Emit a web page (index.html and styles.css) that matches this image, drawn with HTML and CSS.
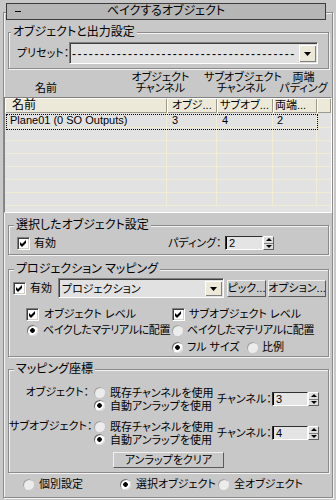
FILE: index.html
```html
<!DOCTYPE html>
<html lang="ja">
<head>
<meta charset="utf-8">
<title>ベイクするオブジェクト</title>
<link rel="stylesheet" href="styles.css">
</head>
<body>
<div class="panel">
  <div class="titlebar"><span class="minus"></span><span class="title">ベイクするオブジェクト</span><span></span></div>
  <div class="frame">
    <fieldset class="group g1">
      <legend>オブジェクトと出力設定</legend>
      <div class="gbody b1">
        <span class="plabel">プリセット：</span>
        <div class="combo preset"><span class="ctext dashes">----------------------------------------</span><span class="drop"><svg width="7" height="4" viewBox="0 0 7 4"><path d="M0 0h7L3.5 4z"/></svg></span></div>
      </div>
    </fieldset>

    <div class="colheads">
      <div class="ch ch1">名前</div>
      <div class="ch ch2">オブジェクト<br>チャンネル</div>
      <div class="ch ch3">サブオブジェクト<br>チャンネル</div>
      <div class="ch ch4">両端<br>パディング</div>
    </div>

    <div class="list">
      <div class="lhead">
        <span class="hc c1 hp1">名前</span><span class="hc c2 hp2">オブジ...</span><span class="hc c3 hp3">サブオブ...</span><span class="hc c4 hp4">両端...</span><span class="hc c5"></span>
      </div>
      <div class="lrow first"><span class="cell c1">Plane01 (0 SO Outputs)</span><span class="cell c2">3</span><span class="cell c3">4</span><span class="cell c4">2</span><span class="cell c5"></span></div>
      <div class="lrow"><span class="cell c1"></span><span class="cell c2"></span><span class="cell c3"></span><span class="cell c4"></span><span class="cell c5"></span></div>
      <div class="lrow"><span class="cell c1"></span><span class="cell c2"></span><span class="cell c3"></span><span class="cell c4"></span><span class="cell c5"></span></div>
      <div class="lrow"><span class="cell c1"></span><span class="cell c2"></span><span class="cell c3"></span><span class="cell c4"></span><span class="cell c5"></span></div>
      <div class="lrow"><span class="cell c1"></span><span class="cell c2"></span><span class="cell c3"></span><span class="cell c4"></span><span class="cell c5"></span></div>
      <div class="lrow"><span class="cell c1"></span><span class="cell c2"></span><span class="cell c3"></span><span class="cell c4"></span><span class="cell c5"></span></div>
      <div class="lrow"><span class="cell c1"></span><span class="cell c2"></span><span class="cell c3"></span><span class="cell c4"></span><span class="cell c5"></span></div>
    </div>

    <fieldset class="group g2">
      <legend>選択したオブジェクト設定</legend>
      <div class="gbody b2">
        <div class="opt w151"><span class="chk"><svg width="11" height="11" viewBox="0 0 11 11"><path d="M2 4L4 6L8 2V5L4 9L2 7Z"/></svg></span>有効</div>
        <span class="padlabel">パディング：</span>
        <span class="spin"><span class="field f38">2</span><span class="arrows"><i class="up"></i><i class="dn"></i></span></span>
      </div>
    </fieldset>

    <fieldset class="group g3">
      <legend>プロジェクション マッピング</legend>
      <div class="gbody b3">
        <div class="prow">
          <div class="opt w45"><span class="chk"><svg width="11" height="11" viewBox="0 0 11 11"><path d="M2 4L4 6L8 2V5L4 9L2 7Z"/></svg></span>有効</div>
          <div class="combo proj"><span class="ctext">プロジェクション</span><span class="drop"><svg width="7" height="4" viewBox="0 0 7 4"><path d="M0 0h7L3.5 4z"/></svg></span></div>
          <span class="btn pick">ピック...</span>
          <span class="btn optbtn">オプション...</span>
        </div>
        <div class="prow r2">
          <div class="opt lcol gap5"><span class="chk"><svg width="11" height="11" viewBox="0 0 11 11"><path d="M2 4L4 6L8 2V5L4 9L2 7Z"/></svg></span>オブジェクト レベル</div>
          <div class="opt"><span class="chk"><svg width="11" height="11" viewBox="0 0 11 11"><path d="M2 4L4 6L8 2V5L4 9L2 7Z"/></svg></span>サブオブジェクト レベル</div>
        </div>
        <div class="prow r3">
          <div class="opt lcol rpad"><span class="radio on"></span><span class="tight">ベイクしたマテリアルに配置</span></div>
          <div class="opt"><span class="radio"></span><span class="tight">ベイクしたマテリアルに配置</span></div>
        </div>
        <div class="prow r4">
          <div class="opt lcol"></div>
          <div class="opt w75"><span class="radio on"></span>フル サイズ</div>
          <div class="opt"><span class="radio"></span>比例</div>
        </div>
      </div>
    </fieldset>

    <fieldset class="group g4">
      <legend>マッピング座標</legend>
      <div class="gbody b4">
        <div class="sect">
          <span class="slabel">オブジェクト：</span>
          <div class="rcol">
            <div class="ropt"><span class="radio"></span>既存チャンネルを使用</div>
            <div class="ropt"><span class="radio on"></span>自動アンラップを使用</div>
          </div>
          <div class="chan"><span class="clabel">チャンネル：</span><span class="spin"><span class="field f36">3</span><span class="arrows"><i class="up"></i><i class="dn"></i></span></span></div>
        </div>
        <div class="sect s2">
          <span class="slabel">サブオブジェクト：</span>
          <div class="rcol">
            <div class="ropt"><span class="radio"></span>既存チャンネルを使用</div>
            <div class="ropt"><span class="radio on"></span>自動アンラップを使用</div>
          </div>
          <div class="chan"><span class="clabel">チャンネル：</span><span class="spin"><span class="field f36">4</span><span class="arrows"><i class="up"></i><i class="dn"></i></span></span></div>
        </div>
        <span class="btn clear">アンラップをクリア</span>
      </div>
    </fieldset>

    <div class="bottom">
      <div class="opt w97"><span class="radio"></span>個別設定</div>
      <div class="opt w98"><span class="radio on"></span>選択オブジェクト</div>
      <div class="opt"><span class="radio"></span>全オブジェクト</div>
    </div>
  </div>
</div>
</body>
</html>
```

FILE: styles.css
```css
* { box-sizing: border-box; }
html, body { margin: 0; padding: 0; }
body {
  width: 336px;
  height: 500px;
  overflow: hidden;
  background: #c8c8c8;
  color: #000;
  font-family: "Liberation Sans", "Noto Sans CJK JP", sans-serif;
  font-size: 11px;
  line-height: 14px;
  font-feature-settings: "palt";
}

.panel { padding-top: 3px; }

/* title bar */
.titlebar {
  position: relative;
  z-index: 1;
  margin-left: 6px;
  width: 320px;
  height: 17px;
  background: #b6b6b6;
  border: 1px solid #3c3c3c;
  display: grid;
  grid-template-columns: 1fr auto 1fr;
  align-items: center;
}
.minus { width: 6px; height: 1px; background: #000; margin-left: 8px; }
.title { line-height: 15px; font-size: 12px; }

/* rollout frame */
.frame {
  margin: -8px 0 0 3px;
  width: 330px;
  height: 486px;
  border: 1px solid #8a8a8a;
  box-shadow: inset 1px 1px 0 #f4f4f4, 1px 1px 0 #f4f4f4;
}

/* group boxes */
.group {
  margin: 0 3px 0 4px;
  padding: 0;
  min-width: 0;
  border: 1px solid #8a8a8a;
  box-shadow: inset 1px 1px 0 #f4f4f4, 1px 1px 0 #f4f4f4;
}
.group legend {
  padding: 0 2px;
  margin-left: 5px;
  line-height: 14px;
  font-size: 12px;
  background: #c8c8c8;
}
.g1 { margin-top: 12px; }
.g1 legend { margin-left: 2px; }
.g2 { margin-top: 5px; }
.g3 { margin-top: 7px; }
.g4 { margin-top: 5px; }

.gbody { display: flex; }
.b1 { padding: 3px 0 4px 8px; align-items: center; }
.b2 { padding: 3px 0 3px 8px; align-items: center; box-sizing: content-box; height: 16px; }
.b3 { flex-direction: column; padding: 2px 0 2px 4px; }
.b4 { flex-direction: column; padding: 10px 0 4px 0; }

.plabel { width: 52px; white-space: nowrap; }
.padlabel { width: 57px; white-space: nowrap; }

/* combo box */
.combo {
  display: flex;
  align-items: center;
  background: #e1e1e1;
  border: 1px solid;
  border-color: #808080 #ffffff #ffffff #808080;
  box-shadow: inset 1px 1px 0 #404040;
  padding: 1px 1px 0 0;
}
.preset { width: 249px; height: 22px; }
.proj { width: 166px; height: 20px; margin-right: 3px; }
.ctext { flex: 1; padding-left: 3px; white-space: nowrap; overflow: hidden; }
.dashes { letter-spacing: 1.6px; padding-left: 2px; font-size: 12px; }
.drop {
  width: 17px;
  align-self: stretch;
  margin: 1px 0 1px 0;
  background: #ece9d8;
  box-shadow: inset 1px 1px 0 #ffffff, inset -1px -1px 0 #808080;
  display: flex;
  align-items: center;
  justify-content: center;
}
.drop svg { display: block; fill: #000; }

/* column headers above list */
.colheads {
  display: flex;
  align-items: flex-end;
  height: 23px;
  margin-top: 2px;
  line-height: 11px;
}
.ch { text-align: center; white-space: nowrap; }
.ch1 { margin-left: 26px; width: 32px; }
.ch2 { margin-left: 68px; width: 61px; }
.ch3 { margin-left: 13px; width: 75px; }
.ch4 { width: 49px; }

/* list */
.list {
  width: 328px;
  height: 116px;
  margin-top: 3px;
  border: 1px solid;
  border-color: #808080 #ffffff #ffffff #808080;
  background: #e2e2e2;
  overflow: hidden;
}
.lhead { display: flex; height: 15px; }
.hc {
  background: #ece9d8;
  box-shadow: inset 1px 1px 0 #ffffff, inset -1px -1px 0 #9d9a8c;
  line-height: 14px;
  white-space: nowrap;
  overflow: hidden;
}
.c1 { width: 162px; }
.c2 { width: 50px; }
.c3 { width: 56px; }
.c4 { width: 44px; }
.c5 { width: 14px; }
.hp1 { padding-left: 7px; font-size: 12px; }
.hp2 { padding-left: 5px; }
.hp3 { padding-left: 3px; }
.hp4 { padding-left: 2px; }

.lrow { display: flex; height: 13px; }
.lrow.first { height: 15px; position: relative; }
.lrow.first::after {
  content: "";
  position: absolute;
  left: 1px;
  top: 1px;
  width: 310px;
  height: 14px;
  border: 1px dotted #000;
}
.cell {
  border-right: 1px solid #f1ecd4;
  border-bottom: 1px solid #f1ecd4;
  padding-left: 5px;
  font-size: 11px;
  line-height: 14px;
  white-space: nowrap;
  overflow: hidden;
}
.cell.c5 { border-right: 0; }
.lrow.first .c4 { padding-left: 4px; }

/* options */
.opt { display: flex; align-items: center; gap: 4px; white-space: nowrap; height: 14px; }
.w151 { width: 151px; }
.w45 { width: 45px; }
.w75 { width: 75px; }
.w97 { width: 97px; }
.w98 { width: 98px; }
.gap5 { gap: 5px; }
.lcol { width: 146px; }
.rpad { padding-left: 1px; gap: 5px; }
.tight { letter-spacing: -0.4px; }

.chk {
  flex: none;
  width: 13px;
  height: 13px;
  background: #ffffff;
  border: 1px solid;
  border-color: #808080 #ffffff #ffffff #808080;
  box-shadow: inset 1px 1px 0 #404040, inset -1px -1px 0 #d4d0c8;
}
.chk svg { display: block; fill: #000; }

.radio {
  flex: none;
  width: 11px;
  height: 11px;
  border-radius: 50%;
  background: #ececec;
  box-shadow: inset 1px 1px 0 #a2a2a2;
}
.radio.on {
  background: radial-gradient(circle at 50% 50%, #000 0 2px, #ffffff 2.6px);
  box-shadow: inset 1px 1px 0 #6a6a6a, inset -1px -1px 0 #d8d8d8;
}

/* spinner */
.spin { display: flex; height: 14px; flex: none; }
.field {
  background: #e4e4e4;
  border: 1px solid;
  border-color: #303030 #ffffff #ffffff #303030;
  box-shadow: inset 1px 0 0 #000;
  font-size: 11px;
  line-height: 12px;
  padding-left: 3px;
}
.f38 { width: 38px; }
.f36 { width: 36px; }
.arrows {
  width: 11px;
  display: flex;
  flex-direction: column;
  background: #dedede;
  border: 1px solid;
  border-color: #ffffff #606060 #606060 #ffffff;
}
.arrows i { flex: 1; display: flex; align-items: center; justify-content: center; }
.arrows .dn { border-top: 1px solid #808080; }
.up::before {
  content: "";
  border-left: 3px solid transparent;
  border-right: 3px solid transparent;
  border-bottom: 3px solid #000;
}
.dn::before {
  content: "";
  border-left: 3px solid transparent;
  border-right: 3px solid transparent;
  border-top: 3px solid #000;
}

/* buttons */
.btn {
  display: flex;
  align-items: center;
  justify-content: center;
  background: #c8c8c8;
  border: 1px solid;
  border-color: #f0f0f0 #5a5a5a #5a5a5a #f0f0f0;
  white-space: nowrap;
  flex: none;
}
.pick { width: 39px; height: 17px; margin-right: 2px; }
.optbtn { width: 58px; height: 17px; }
.clear { width: 111px; height: 16px; margin: 6px auto 0; }

/* projection rows */
.prow { display: flex; align-items: center; }
.prow:first-child { height: 20px; }
.r2 { margin-top: 9px; margin-left: 13px; }
.r3 { margin-top: 2px; margin-left: 13px; }
.r4 { margin-top: 3px; margin-left: 13px; }

/* mapping coordinates */
.sect { display: flex; align-items: flex-start; }
.s2 { margin-top: 8px; }
.slabel { width: 81px; text-align: right; padding-right: 1px; line-height: 13px; white-space: nowrap; }
.rcol { margin-left: 4px; width: 123px; }
.ropt { display: flex; align-items: center; gap: 5px; height: 13px; white-space: nowrap; }
.chan { display: flex; align-items: center; align-self: center; }
.clabel { width: 55px; white-space: nowrap; }

/* bottom row */
.bottom {
  display: flex;
  align-items: center;
  height: 14px;
  margin-top: 4px;
  padding-left: 19px;
}
.bottom .opt { gap: 5px; }
```
